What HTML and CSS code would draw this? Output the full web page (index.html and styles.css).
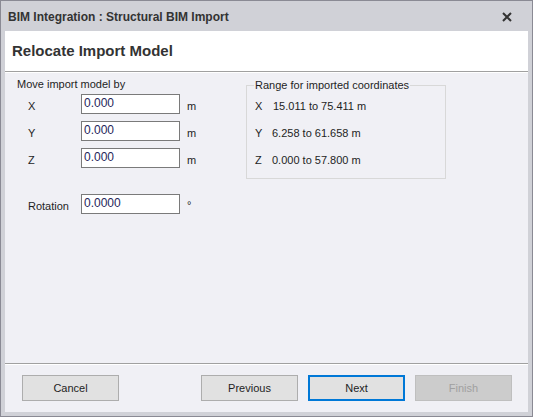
FILE: index.html
```html
<!DOCTYPE html>
<html>
<head>
<meta charset="utf-8">
<link rel="stylesheet" href="styles.css">
</head>
<body>
<div class="window">
  <div class="titlebar">
    <span class="title">BIM Integration : Structural BIM Import</span>
    <svg class="close" width="10" height="10" viewBox="0 0 10 10"><path d="M1 1 L9 9 M9 1 L1 9" stroke="#333" stroke-width="2"/></svg>
  </div>
  <div class="client">
    <div class="header">Relocate Import Model</div>
    <div class="body">
      <div class="move">
        <div class="caption">Move import model by</div>
        <div class="grid">
          <span class="lbl">X</span><div class="input">0.000</div><span class="unit">m</span>
          <span class="lbl">Y</span><div class="input">0.000</div><span class="unit">m</span>
          <span class="lbl">Z</span><div class="input">0.000</div><span class="unit">m</span>
          <span class="lbl rot">Rotation</span><div class="input rot">0.0000</div><span class="unit deg rot">°</span>
        </div>
      </div>
      <fieldset class="range">
        <legend>Range for imported coordinates</legend>
        <div class="rgrid">
          <span>X</span><span class="v1">15.011 to 75.411 m</span>
          <span>Y</span><span>6.258 to 61.658 m</span>
          <span>Z</span><span>0.000 to 57.800 m</span>
        </div>
      </fieldset>
    </div>
    <div class="footer">
      <button class="btn">Cancel</button>
      <div class="spacer"></div>
      <button class="btn">Previous</button>
      <button class="btn default">Next</button>
      <button class="btn disabled">Finish</button>
    </div>
  </div>
</div>
</body>
</html>
```
FILE: styles.css
```css
html, body {
  margin: 0;
  padding: 0;
}
body {
  font-family: "Liberation Sans", Arial, sans-serif;
  font-size: 11px;
  color: #1e1e1e;
}
.window {
  box-sizing: border-box;
  width: 533px;
  height: 417px;
  border: 1px solid #8a8a94;
  background: #d0d1d7;
  padding: 0 4px 4px 4px;
  display: flex;
  flex-direction: column;
}
.titlebar {
  height: 30px;
  display: flex;
  align-items: center;
  padding-left: 3px;
  padding-right: 16px;
}
.title {
  font-weight: bold;
  font-size: 12px;
  color: #333;
  flex: 1;
  margin-top: 1px;
}
.close {
  display: block;
  margin-top: 1px;
}
.client {
  flex: 1;
  display: flex;
  flex-direction: column;
  background: #f0f0f5;
}
.header {
  background: #fff;
  height: 41px;
  box-sizing: border-box;
  border-bottom: 1px solid #a0a0a0;
  display: flex;
  align-items: center;
  padding-left: 7px;
  padding-bottom: 1px;
  font-size: 15px;
  font-weight: bold;
  color: #333;
}
.body {
  flex: 1;
  display: flex;
  padding: 4px 0 0 12px;
  border-top: 1px solid #fff;
}
.move {
  width: 229px;
}
.caption {
  line-height: 14px;
}
.grid {
  display: grid;
  grid-template-columns: 53px 99px auto;
  grid-template-rows: 20px 20px 20px 39px;
  row-gap: 7px;
  margin-left: 11px;
  margin-top: 3px;
  align-items: center;
}
.lbl {
  padding-top: 3px;
}
.input {
  box-sizing: border-box;
  height: 20px;
  border: 1px solid #7a7a7a;
  background: #fff;
  color: #26265a;
  padding-left: 2px;
  line-height: 16px;
  font-size: 12px;
}
.unit {
  padding-left: 7px;
  padding-top: 3px;
}
.deg {
  padding-top: 0;
  padding-bottom: 3px;
}
.rot {
  align-self: end;
}
.lbl.rot {
  padding-bottom: 2px;
}
.range {
  margin: 1px 0 0 0;
  width: 200px;
  height: 101px;
  box-sizing: border-box;
  border: 1px solid #d8d8d8;
  padding: 0 0 0 8px;
}
.range legend {
  padding: 0 1px;
  margin-left: -1px;
  line-height: 14px;
}
.rgrid {
  display: grid;
  grid-template-columns: 17px auto;
  grid-auto-rows: 27px;
  align-items: center;
}
.v1 {
  padding-left: 1px;
}
.footer {
  height: 48px;
  border-top: 1px solid #a0a0a0;
  box-shadow: inset 0 1px 0 #fff;
  display: flex;
  align-items: center;
  padding: 0 16px 0 17px;
  gap: 10px;
}
.spacer {
  flex: 1;
}
.btn {
  box-sizing: border-box;
  width: 97px;
  height: 26px;
  background: #e1e1e1;
  border: 1px solid #adadad;
  font-family: "Liberation Sans", Arial, sans-serif;
  font-size: 11px;
  color: #1e1e1e;
  padding: 0;
}
.default {
  border: 2px solid #0078d7;
}
.disabled {
  background: #cccccc;
  border-color: #bfbfbf;
  color: #a0a0a0;
}
```
